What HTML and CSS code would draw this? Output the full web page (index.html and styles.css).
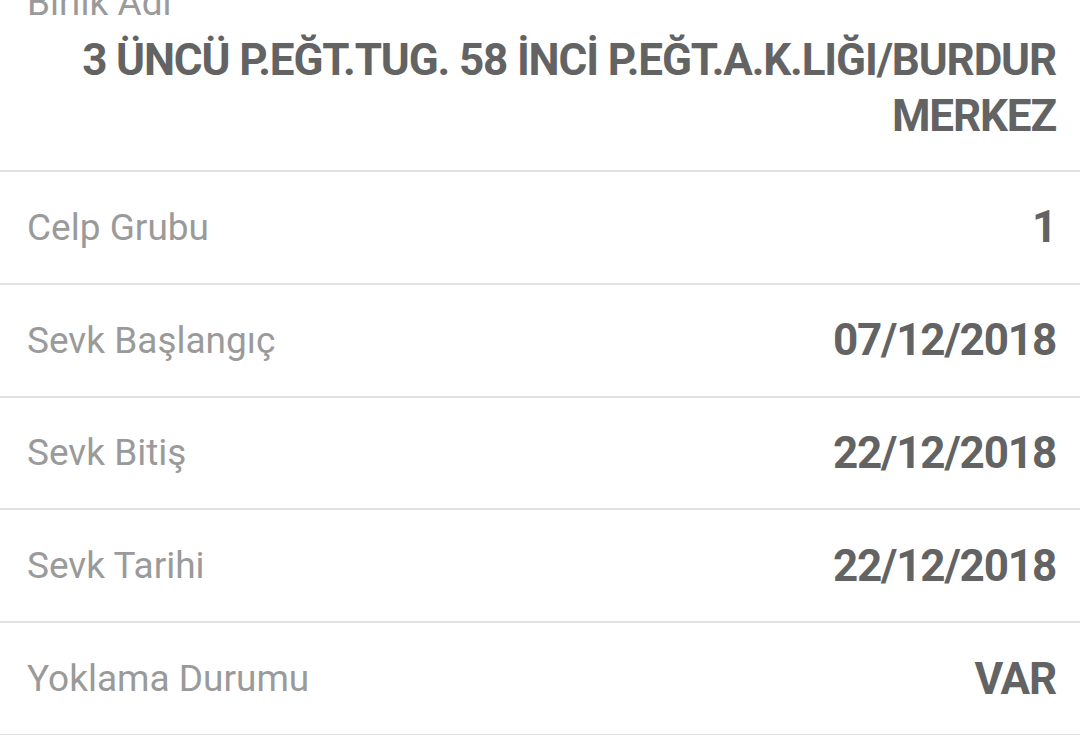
FILE: index.html
```html
<!DOCTYPE html>
<html>
<head>
    <title>Sevk Bilgileri</title>

    <link rel="stylesheet" href="styles.css">
</head>
<body>
    <!-- Sevk detail list -->
    <div class="detail-list">
        <div class="detail-row detail-row-stacked">
            <span class="detail-label">Birlik Adı</span>
            <span class="detail-value">3 ÜNCÜ P.EĞT.TUG. 58 İNCİ P.EĞT.A.K.LIĞI/BURDUR MERKEZ</span>
        </div>
        <div class="detail-row">
            <span class="detail-label">Celp Grubu</span>
            <span class="detail-value">1</span>
        </div>
        <div class="detail-row">
            <span class="detail-label">Sevk Başlangıç</span>
            <span class="detail-value">07/12/2018</span>
        </div>
        <div class="detail-row">
            <span class="detail-label">Sevk Bitiş</span>
            <span class="detail-value">22/12/2018</span>
        </div>
        <div class="detail-row">
            <span class="detail-label">Sevk Tarihi</span>
            <span class="detail-value">22/12/2018</span>
        </div>
        <div class="detail-row">
            <span class="detail-label">Yoklama Durumu</span>
            <span class="detail-value">VAR</span>
        </div>
    </div>
</body>
</html>
```

FILE: styles.css
```css
/* Base page */
body {
    margin: 0;
    background-color: #ffffff;
    font-family: Roboto, "Noto Sans", sans-serif;
    overflow: hidden;
}

/* List of label / value rows */
.detail-list {
    display: flex;
    flex-direction: column;
}

.detail-row {
    display: flex;
    flex-direction: row;
    align-items: center;
    justify-content: space-between;
    height: 110.8px;
    padding: 0 24px 0 27px;
    border-bottom: 2px solid #e2e2e2;
}

.detail-label {
    font-size: 37px;
    color: #9a9a9a;
    white-space: nowrap;
}

.detail-value {
    font-size: 44px;
    font-weight: bold;
    letter-spacing: -1.15px;
    color: #636363;
    text-align: right;
}

/* First row: label on top, long value wrapped under it */
.detail-row-stacked {
    flex-direction: column;
    align-items: stretch;
    justify-content: flex-start;
    height: auto;
    margin-top: -19px;
    padding-bottom: 26px;
}

.detail-row-stacked .detail-label {
    line-height: 43px;
    margin-bottom: 8px;
}

.detail-row-stacked .detail-value {
    line-height: 56px;
}
```
